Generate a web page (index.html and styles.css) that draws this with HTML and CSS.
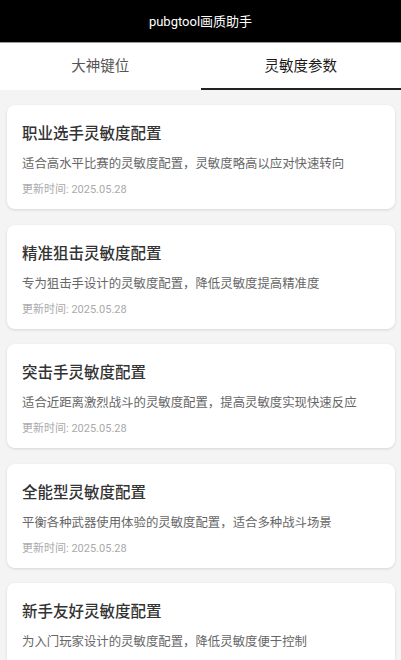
FILE: index.html
```html
<!DOCTYPE html>
<html lang="zh">
<head>
<meta charset="utf-8">
<title>pubgtool画质助手</title>
<link rel="stylesheet" href="styles.css">
</head>
<body>
<header class="appbar">pubgtool画质助手</header>
<nav class="tabs">
  <div class="tab">大神键位</div>
  <div class="tab active">灵敏度参数</div>
</nav>
<main class="list">
  <section class="card">
    <h2 class="title">职业选手灵敏度配置</h2>
    <p class="desc">适合高水平比赛的灵敏度配置，灵敏度略高以应对快速转向</p>
    <p class="date">更新时间: 2025.05.28</p>
  </section>
  <section class="card">
    <h2 class="title">精准狙击灵敏度配置</h2>
    <p class="desc">专为狙击手设计的灵敏度配置，降低灵敏度提高精准度</p>
    <p class="date">更新时间: 2025.05.28</p>
  </section>
  <section class="card">
    <h2 class="title">突击手灵敏度配置</h2>
    <p class="desc">适合近距离激烈战斗的灵敏度配置，提高灵敏度实现快速反应</p>
    <p class="date">更新时间: 2025.05.28</p>
  </section>
  <section class="card">
    <h2 class="title">全能型灵敏度配置</h2>
    <p class="desc">平衡各种武器使用体验的灵敏度配置，适合多种战斗场景</p>
    <p class="date">更新时间: 2025.05.28</p>
  </section>
  <section class="card">
    <h2 class="title">新手友好灵敏度配置</h2>
    <p class="desc">为入门玩家设计的灵敏度配置，降低灵敏度便于控制</p>
    <p class="date">更新时间: 2025.05.28</p>
  </section>
</main>
</body>
</html>
```
FILE: styles.css
```css
* { box-sizing: border-box; }
html, body {
  margin: 0;
  padding: 0;
  background: #f4f4f4;
  font-family: Roboto, "Noto Sans CJK SC", sans-serif;
}
.appbar {
  height: 43px;
  background: #000;
  color: #fff;
  font-size: 13px;
  display: flex;
  align-items: center;
  justify-content: center;
  border-bottom: 1px solid #9a9a9a;
  padding-bottom: 1px;
}
.tabs {
  display: flex;
  height: 47px;
  background: #fff;
}
.tab {
  flex: 1;
  display: flex;
  align-items: center;
  justify-content: center;
  font-size: 14.5px;
  color: #555;
  padding-bottom: 2px;
  border-bottom: 2px solid transparent;
}
.tab.active {
  color: #1a1a1a;
  border-bottom-color: #222;
}
.list {
  display: flex;
  flex-direction: column;
  gap: 15.5px;
  padding: 15px 6px 16px 7px;
}
.card {
  background: #fff;
  border-radius: 8px;
  box-shadow: 0 1px 3px rgba(0, 0, 0, 0.12);
  height: 104px;
  padding: 18px 15px 0 15px;
}
.title {
  margin: 0;
  font-size: 15.5px;
  line-height: 22px;
  font-weight: 500;
  color: #333;
}
.desc {
  margin: 10px 0 0 0;
  font-size: 12.4px;
  line-height: 18px;
  color: #666;
}
.date {
  margin: 10px 0 0 0;
  font-size: 11px;
  line-height: 14px;
  color: #aaa;
}
```
